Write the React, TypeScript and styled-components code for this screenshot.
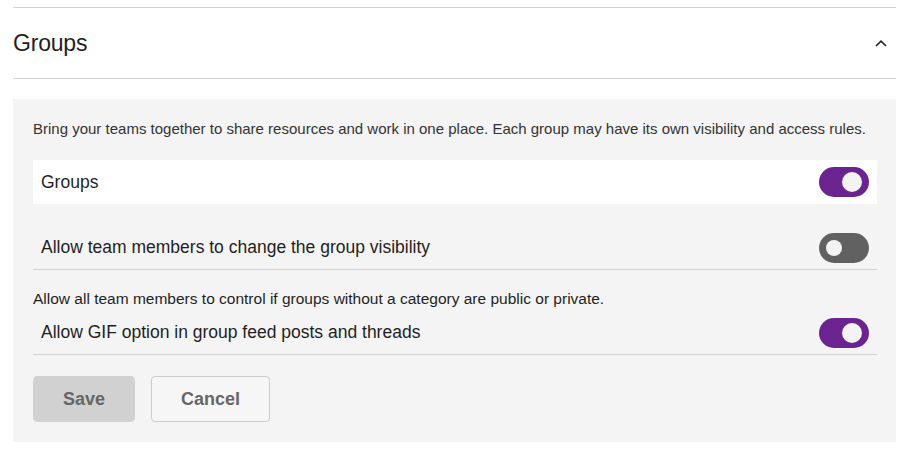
import styled, { createGlobalStyle } from "styled-components";

const GlobalStyle = createGlobalStyle`
  body {
    margin: 0;
    background: #fff;
    font-family: "Liberation Sans", Arial, sans-serif;
    color: #1f1f1f;
  }
`;

type Setting = {
  label: string;
  on: boolean;
  highlighted?: boolean;
  bordered?: boolean;
  helper?: string;
};

const settings: Setting[] = [
  { label: "Groups", on: true, highlighted: true },
  {
    label: "Allow team members to change the group visibility",
    on: false,
    bordered: true,
  },
  {
    label: "Allow GIF option in group feed posts and threads",
    on: true,
    bordered: true,
    helper:
      "Allow all team members to control if groups without a category are public or private.",
  },
];

export default function App() {
  return (
    <>
      <GlobalStyle />
      <Page>
        <SectionHeader>
          <Title>Groups</Title>
          <Chevron viewBox="0 0 12 7" aria-hidden>
            <path d="M1 6 L6 1.2 L11 6" />
          </Chevron>
        </SectionHeader>
        <Panel>
          <Description>
            Bring your teams together to share resources and work in one place.
            Each group may have its own visibility and access rules.
          </Description>
          {settings.map((s) => (
            <div key={s.label}>
              {s.helper && <Helper>{s.helper}</Helper>}
              <Row
                $highlighted={s.highlighted}
                $bordered={s.bordered}
                $tight={!!s.helper}
              >
                <Label>{s.label}</Label>
                <Toggle $on={s.on} role="switch" aria-checked={s.on}>
                  <Knob $on={s.on} />
                </Toggle>
              </Row>
            </div>
          ))}
          <Actions>
            <Button $primary>Save</Button>
            <Button>Cancel</Button>
          </Actions>
        </Panel>
      </Page>
    </>
  );
}

const Page = styled.div`
  padding: 7px 13px 0;
`;

const SectionHeader = styled.div`
  height: 70px;
  display: flex;
  align-items: center;
  justify-content: space-between;
  border-top: 1px solid #d1d1d1;
  border-bottom: 1px solid #d1d1d1;
  padding-right: 9px;
`;

const Title = styled.h2`
  margin: 0;
  font-size: 23px;
  font-weight: 400;
  color: #1f1f1f;
  letter-spacing: -0.2px;
`;

const Chevron = styled.svg`
  width: 12px;
  height: 7px;
  fill: none;
  stroke: #222;
  stroke-width: 1.6;
`;

const Panel = styled.div`
  margin-top: 20px;
  background: #f4f4f4;
  padding: 20px 19px 20px 20px;
`;

const Description = styled.p`
  margin: 0 0 21px;
  font-size: 15px;
  line-height: 20px;
  color: #333;
`;

const Row = styled.div<{
  $highlighted?: boolean;
  $bordered?: boolean;
  $tight?: boolean;
}>`
  display: flex;
  align-items: center;
  justify-content: space-between;
  height: 44px;
  padding: 0 8px;
  margin-top: ${({ $tight, $highlighted }) =>
    $highlighted ? "0" : $tight ? "2px" : "22px"};
  background: ${({ $highlighted }) => ($highlighted ? "#fff" : "transparent")};
  border-bottom: ${({ $bordered }) =>
    $bordered ? "1px solid #d1d1d1" : "none"};
  box-sizing: border-box;
`;

const Label = styled.span`
  font-size: 17.5px;
  color: #1f1f1f;
`;

const Toggle = styled.div<{ $on: boolean }>`
  width: 50px;
  height: 30px;
  border-radius: 15px;
  background: ${({ $on }) => ($on ? "#6b2390" : "#616161")};
  display: flex;
  align-items: center;
  justify-content: ${({ $on }) => ($on ? "flex-end" : "flex-start")};
  padding: 0 7px;
  box-sizing: border-box;
`;

const Knob = styled.span<{ $on: boolean }>`
  width: ${({ $on }) => ($on ? "20px" : "16px")};
  height: ${({ $on }) => ($on ? "20px" : "16px")};
  border-radius: 50%;
  background: #f3f3f3;
`;

const Helper = styled.p`
  margin: 19px 0 0;
  font-size: 15.5px;
  line-height: 20px;
  color: #1f1f1f;
`;

const Actions = styled.div`
  display: flex;
  gap: 16px;
  margin-top: 21px;
`;

const Button = styled.button<{ $primary?: boolean }>`
  height: 46px;
  padding: 0 29px;
  border-radius: 4px;
  font-family: "Liberation Sans", Arial, sans-serif;
  font-size: 18px;
  font-weight: 700;
  color: #666;
  background: ${({ $primary }) => ($primary ? "#d1d1d1" : "#f6f6f6")};
  border: 1px solid ${({ $primary }) => ($primary ? "#d1d1d1" : "#cccccc")};
`;
